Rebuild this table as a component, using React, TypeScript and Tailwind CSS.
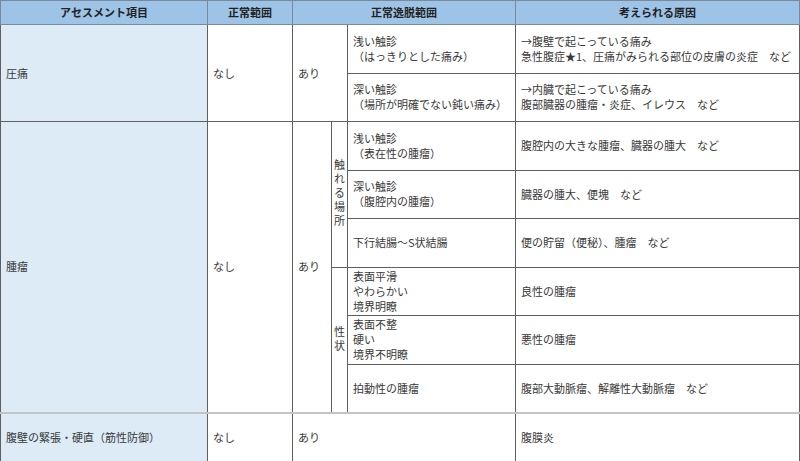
const font = { fontFamily: '"Noto Sans CJK JP", "Noto Sans", sans-serif' };

const cell = 'border border-[#5f5f5f] px-[5px] align-middle text-left leading-[15px]';
const head = 'border border-[#7a8a9a] bg-[#9dc3e6] text-center font-bold text-[#222] h-[24px]';
const item = `${cell} bg-[#ddebf7]`;
const divider = 'border-t-2 border-t-[#c4c4c4]';

function Lines({ lines }: { lines: string[] }) {
  return (
    <>
      {lines.map((l, i) => (
        <div key={i}>{l}</div>
      ))}
    </>
  );
}

// 縦書きのラベル
function Vertical({ text }: { text: string }) {
  return (
    <div className="flex justify-center">
      <span className="[writing-mode:vertical-rl] tracking-[3px] leading-[14px]">{text}</span>
    </div>
  );
}

const palpable = [
  { sub: ['浅い触診', '（表在性の腫瘤）'], cause: '腹腔内の大きな腫瘤、臓器の腫大　など' },
  { sub: ['深い触診', '（腹腔内の腫瘤）'], cause: '臓器の腫大、便塊　など' },
  { sub: ['下行結腸～S状結腸'], cause: '便の貯留（便秘）、腫瘤　など' },
];

const nature = [
  { sub: ['表面平滑', 'やわらかい', '境界明瞭'], cause: '良性の腫瘤' },
  { sub: ['表面不整', '硬い', '境界不明瞭'], cause: '悪性の腫瘤' },
  { sub: ['拍動性の腫瘤'], cause: '腹部大動脈瘤、解離性大動脈瘤　など' },
];

export default function App() {
  const row = 'h-[48.5px]';
  return (
    <div className="w-[800px] h-[461px] bg-white overflow-hidden" style={font}>
      <table className="w-[800px] table-fixed border-collapse text-[11px] text-[#3a3a3a] border border-[#6b6b6b]">
        <colgroup>
          <col className="w-[207px]" />
          <col className="w-[85px]" />
          <col className="w-[39px]" />
          <col className="w-[16px]" />
          <col className="w-[168px]" />
          <col />
        </colgroup>
        <thead>
          <tr>
            <th className={head}>アセスメント項目</th>
            <th className={head}>正常範囲</th>
            <th className={head} colSpan={3}>正常逸脱範囲</th>
            <th className={head}>考えられる原因</th>
          </tr>
        </thead>
        <tbody>
          <tr className={row}>
            <td className={item} rowSpan={2}>圧痛</td>
            <td className={cell} rowSpan={2}>なし</td>
            <td className={cell} rowSpan={2} colSpan={2}>あり</td>
            <td className={cell}>
              <Lines lines={['浅い触診', '（はっきりとした痛み）']} />
            </td>
            <td className={cell}>
              <Lines lines={['→腹壁で起こっている痛み', '急性腹症★1、圧痛がみられる部位の皮膚の炎症　など']} />
            </td>
          </tr>
          <tr className={row}>
            <td className={cell}>
              <Lines lines={['深い触診', '（場所が明確でない鈍い痛み）']} />
            </td>
            <td className={cell}>
              <Lines lines={['→内臓で起こっている痛み', '腹部臓器の腫瘤・炎症、イレウス　など']} />
            </td>
          </tr>
          {palpable.map((r, i) => (
            <tr className={row} key={`p${i}`}>
              {i === 0 && (
                <>
                  <td className={item} rowSpan={6}>腫瘤</td>
                  <td className={cell} rowSpan={6}>なし</td>
                  <td className={cell} rowSpan={6}>あり</td>
                  <td className={`${cell} !px-0`} rowSpan={3}>
                    <Vertical text="触れる場所" />
                  </td>
                </>
              )}
              <td className={cell}>
                <Lines lines={r.sub} />
              </td>
              <td className={cell}>{r.cause}</td>
            </tr>
          ))}
          {nature.map((r, i) => (
            <tr className={row} key={`n${i}`}>
              {i === 0 && (
                <td className={`${cell} !px-0`} rowSpan={3}>
                  <Vertical text="性状" />
                </td>
              )}
              <td className={cell}>
                <Lines lines={r.sub} />
              </td>
              <td className={cell}>{r.cause}</td>
            </tr>
          ))}
          <tr className={row}>
            <td className={`${item} ${divider}`}>腹壁の緊張・硬直（筋性防御）</td>
            <td className={`${cell} ${divider}`}>なし</td>
            <td className={`${cell} ${divider}`} colSpan={3}>あり</td>
            <td className={`${cell} ${divider}`}>腹膜炎</td>
          </tr>
        </tbody>
      </table>
    </div>
  );
}
